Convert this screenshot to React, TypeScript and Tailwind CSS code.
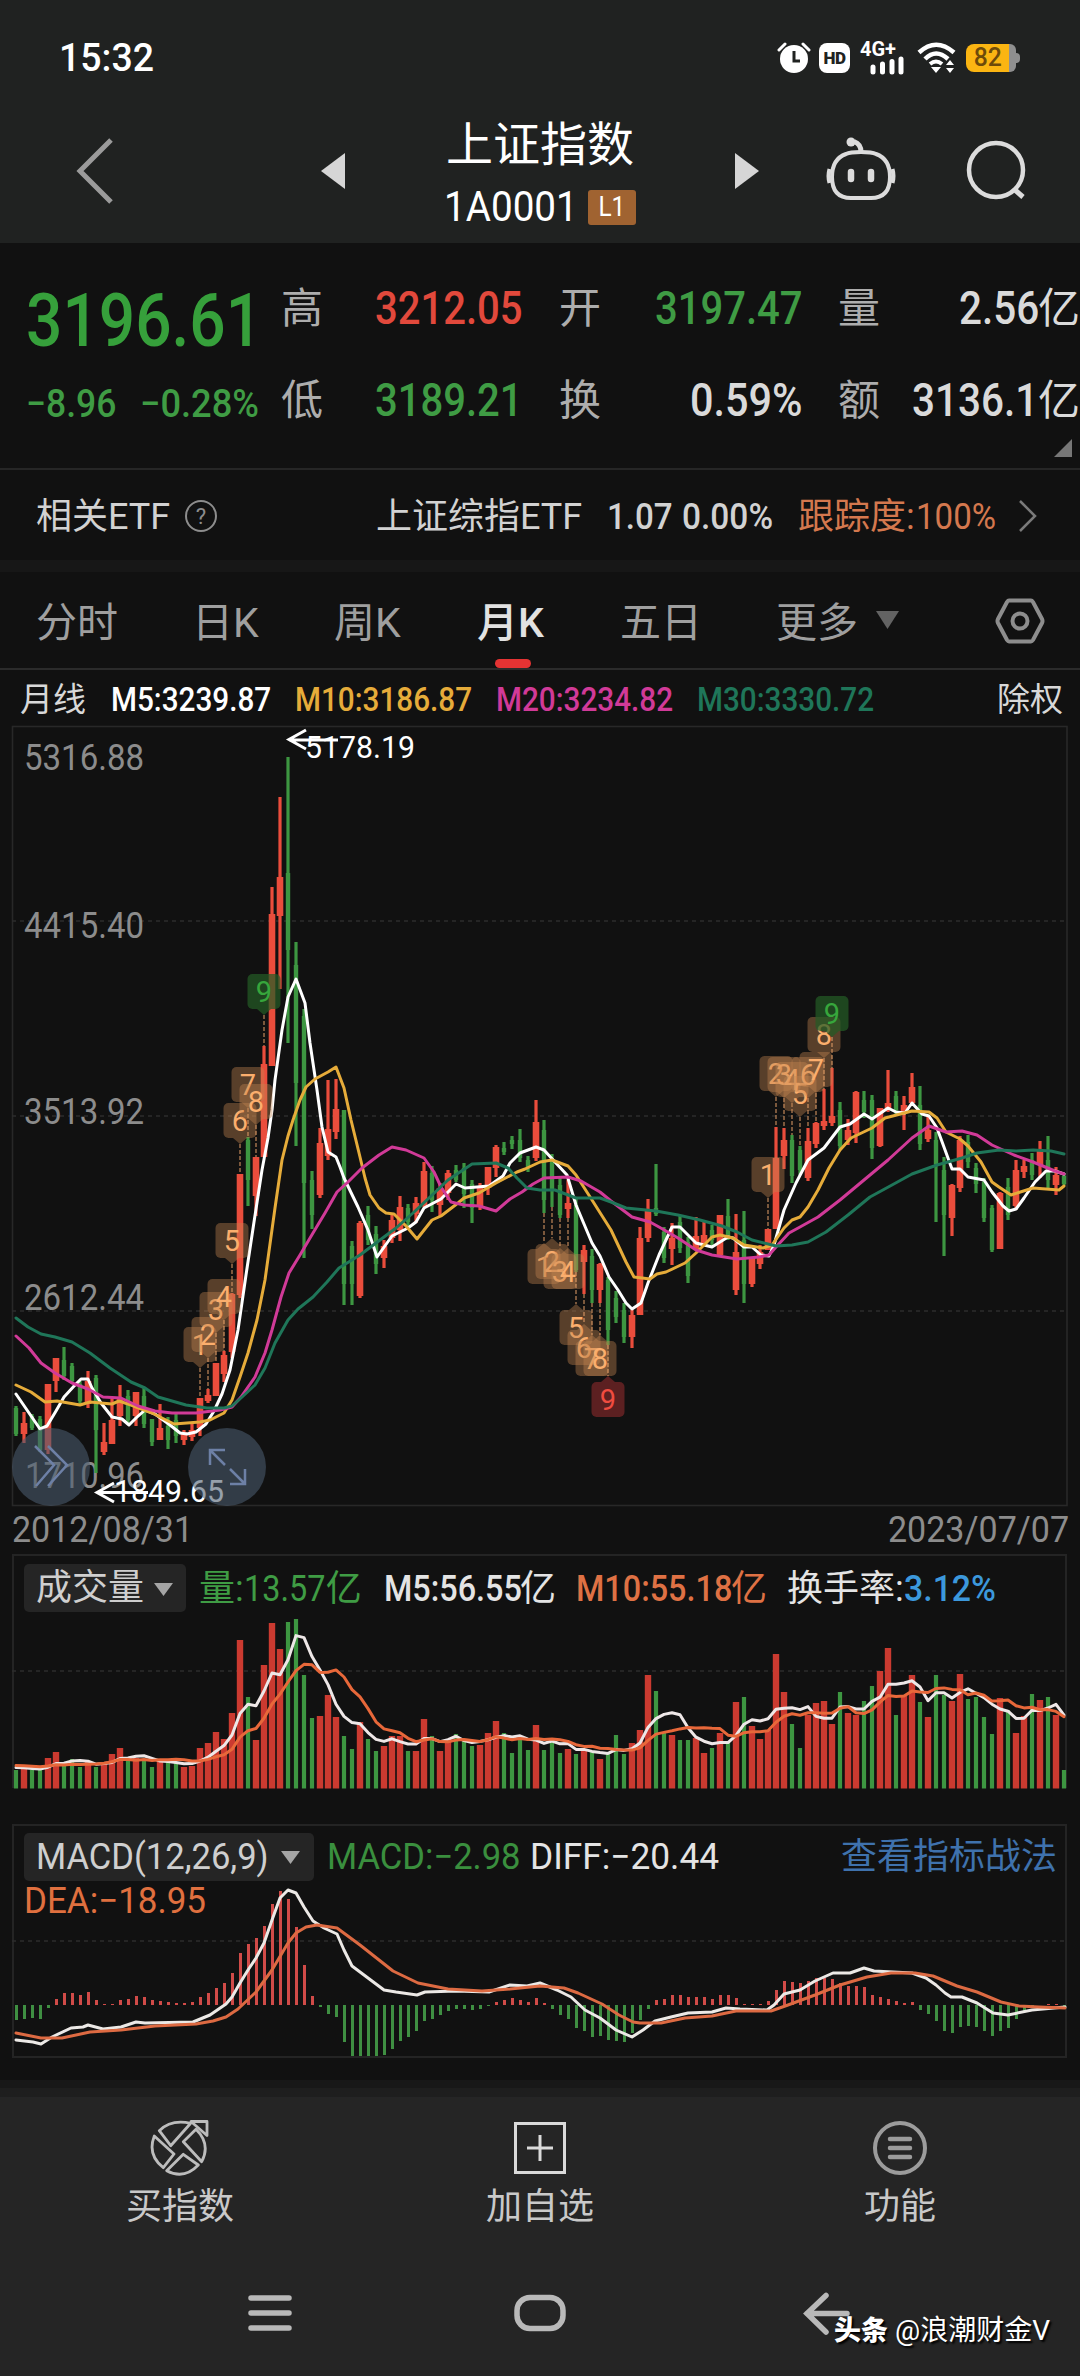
import React from "react";
import clsx from "clsx";

const RED = "#ea4d3c";
const GREEN = "#3d9641";
const FRAME = "#282828";

type Point = [number, number];
// direction, high, body top, body bottom, low (chart pixels)
type Candle = ["r" | "g", number, number, number, number];

const candles: Candle[] = [
  ["g", 1406, 1408, 1434, 1436], ["r", 1412, 1423, 1434, 1443], ["g", 1414, 1416, 1428, 1430], ["g", 1416, 1419, 1450, 1452],
  ["r", 1384, 1384, 1450, 1454], ["r", 1358, 1358, 1381, 1392], ["g", 1347, 1360, 1376, 1380], ["g", 1363, 1366, 1381, 1384],
  ["g", 1381, 1384, 1401, 1404], ["r", 1371, 1381, 1404, 1408], ["g", 1375, 1378, 1430, 1473], ["r", 1423, 1442, 1452, 1455],
  ["r", 1399, 1420, 1444, 1444], ["r", 1385, 1398, 1416, 1426], ["g", 1390, 1396, 1420, 1423], ["r", 1392, 1392, 1416, 1426],
  ["g", 1388, 1396, 1424, 1428], ["g", 1419, 1419, 1442, 1446], ["r", 1404, 1428, 1440, 1440], ["g", 1417, 1426, 1440, 1449],
  ["g", 1413, 1420, 1436, 1443], ["r", 1430, 1432, 1440, 1445], ["r", 1422, 1430, 1437, 1441], ["r", 1398, 1398, 1428, 1436],
  ["r", 1389, 1395, 1401, 1403], ["r", 1363, 1363, 1396, 1396], ["r", 1351, 1355, 1374, 1382], ["r", 1293, 1294, 1352, 1358],
  ["r", 1174, 1174, 1295, 1298], ["g", 1137, 1140, 1180, 1206], ["r", 1157, 1157, 1196, 1216], ["r", 1046, 1064, 1157, 1157],
  ["r", 887, 914, 1066, 1066], ["r", 797, 877, 916, 989], ["g", 757, 873, 950, 1043], ["g", 942, 965, 1083, 1146],
  ["g", 1009, 1016, 1183, 1258], ["g", 1171, 1180, 1215, 1229], ["r", 1128, 1143, 1195, 1198], ["r", 1080, 1129, 1156, 1160],
  ["r", 1079, 1109, 1132, 1139], ["g", 1110, 1110, 1284, 1305], ["g", 1241, 1246, 1284, 1305], ["r", 1221, 1223, 1296, 1298],
  ["g", 1206, 1215, 1240, 1245], ["g", 1226, 1234, 1264, 1274], ["r", 1240, 1246, 1258, 1268], ["r", 1215, 1220, 1238, 1243],
  ["r", 1196, 1207, 1230, 1241], ["g", 1204, 1208, 1222, 1227], ["r", 1197, 1203, 1214, 1223], ["r", 1162, 1171, 1206, 1207],
  ["g", 1166, 1173, 1200, 1212], ["r", 1183, 1188, 1205, 1216], ["r", 1170, 1173, 1193, 1200], ["g", 1165, 1170, 1180, 1182],
  ["g", 1163, 1168, 1194, 1208], ["g", 1180, 1184, 1208, 1223], ["r", 1183, 1186, 1206, 1210], ["r", 1167, 1167, 1188, 1195],
  ["r", 1145, 1147, 1168, 1177], ["g", 1142, 1148, 1152, 1155], ["g", 1136, 1140, 1144, 1149], ["g", 1129, 1140, 1158, 1162],
  ["g", 1156, 1160, 1168, 1172], ["r", 1100, 1122, 1158, 1161], ["g", 1120, 1130, 1200, 1213], ["g", 1154, 1160, 1190, 1207],
  ["g", 1178, 1185, 1215, 1218], ["r", 1180, 1203, 1209, 1218], ["g", 1198, 1205, 1270, 1272], ["r", 1245, 1250, 1262, 1294],
  ["g", 1249, 1256, 1290, 1303], ["r", 1263, 1264, 1290, 1303], ["g", 1277, 1280, 1330, 1345], ["g", 1291, 1298, 1317, 1323],
  ["g", 1303, 1310, 1337, 1343], ["r", 1310, 1315, 1337, 1348], ["r", 1227, 1238, 1315, 1315], ["r", 1199, 1211, 1238, 1242],
  ["g", 1164, 1208, 1214, 1216], ["g", 1227, 1232, 1258, 1263], ["r", 1223, 1238, 1249, 1265], ["g", 1216, 1222, 1248, 1253],
  ["g", 1237, 1242, 1276, 1283], ["r", 1217, 1236, 1249, 1249], ["r", 1222, 1235, 1244, 1246], ["g", 1225, 1230, 1240, 1247],
  ["r", 1215, 1215, 1255, 1257], ["g", 1199, 1216, 1236, 1240], ["r", 1214, 1252, 1290, 1295], ["g", 1211, 1240, 1284, 1303],
  ["r", 1257, 1257, 1284, 1287], ["r", 1245, 1252, 1264, 1269], ["r", 1229, 1229, 1250, 1250], ["r", 1127, 1158, 1229, 1229],
  ["r", 1128, 1140, 1156, 1169], ["g", 1135, 1140, 1176, 1183], ["g", 1146, 1150, 1170, 1175], ["r", 1128, 1141, 1178, 1181],
  ["r", 1122, 1123, 1144, 1148], ["r", 1089, 1121, 1126, 1130], ["r", 1068, 1116, 1123, 1126], ["g", 1102, 1110, 1146, 1150],
  ["r", 1119, 1130, 1140, 1145], ["r", 1091, 1092, 1133, 1143], ["g", 1091, 1100, 1112, 1118], ["g", 1095, 1100, 1148, 1159],
  ["r", 1108, 1108, 1146, 1147], ["r", 1070, 1103, 1108, 1112], ["g", 1091, 1096, 1110, 1114], ["r", 1096, 1105, 1112, 1130],
  ["r", 1073, 1087, 1103, 1106], ["g", 1086, 1105, 1144, 1150], ["r", 1117, 1130, 1139, 1142], ["g", 1132, 1140, 1164, 1222],
  ["g", 1157, 1170, 1215, 1256], ["r", 1184, 1185, 1218, 1236], ["r", 1136, 1140, 1188, 1192], ["g", 1135, 1142, 1162, 1168],
  ["g", 1163, 1168, 1184, 1193], ["g", 1178, 1182, 1218, 1222], ["g", 1205, 1208, 1250, 1252], ["r", 1192, 1193, 1249, 1249],
  ["g", 1178, 1187, 1215, 1220], ["r", 1160, 1170, 1206, 1210], ["r", 1160, 1166, 1172, 1178], ["g", 1153, 1160, 1175, 1180],
  ["r", 1141, 1151, 1165, 1178], ["g", 1136, 1160, 1180, 1188], ["r", 1167, 1175, 1185, 1195], ["g", 1175, 1176, 1184, 1185],
];

const ma5 =
  "16,1394 40,1429 47,1426 56,1411 64,1397 75,1385 81,1379 88,1379 92,1388 101,1403 112,1417 122,1419 129,1425 136,1418 145,1410 155,1414 170,1425 180,1433 187,1434 196,1432 206,1424 214,1411 222,1394 230,1370 238,1330 246,1275 254,1222 262,1170 268,1138 272,1110 275,1080 282,1030 288,997 296,979 305,1003 310,1043 317,1090 322,1127 328,1152 336,1157 340,1167 344,1178 358,1207 368,1230 377,1257 392,1236 408,1228 416,1222 424,1208 441,1199 448,1192 456,1184 465,1188 489,1186 503,1176 510,1163 520,1153 536,1147 544,1150 555,1162 567,1175 576,1205 592,1243 600,1256 609,1277 618,1290 626,1303 632,1309 641,1303 648,1283 659,1255 672,1227 680,1227 696,1243 712,1247 728,1237 733,1238 744,1247 752,1247 761,1255 769,1256 774,1245 784,1210 796,1183 808,1160 824,1148 840,1127 850,1124 864,1114 872,1119 888,1108 896,1112 905,1113 912,1103 922,1114 929,1116 937,1128 952,1169 960,1169 968,1177 984,1180 992,1192 1003,1206 1009,1211 1016,1209 1024,1198 1035,1182 1046,1171 1055,1171 1064,1174";
const ma10 =
  "16,1385 31,1392 45,1402 57,1401 80,1405 90,1402 112,1404 119,1401 131,1405 152,1413 174,1424 200,1422 210,1420 224,1413 232,1400 240,1377 248,1353 257,1320 265,1280 275,1208 282,1160 288,1136 293,1120 300,1100 306,1087 315,1079 328,1072 336,1067 344,1088 351,1120 360,1157 365,1178 370,1195 379,1208 386,1213 394,1214 406,1226 417,1239 432,1220 441,1216 458,1203 464,1198 479,1193 496,1183 517,1172 525,1169 540,1162 552,1160 568,1166 576,1175 592,1200 611,1230 626,1262 634,1277 650,1279 657,1274 666,1272 685,1263 696,1253 712,1237 720,1235 733,1238 744,1245 763,1248 772,1245 784,1228 792,1220 800,1217 808,1207 818,1190 829,1168 840,1150 851,1138 872,1128 885,1118 912,1111 929,1112 937,1118 946,1132 960,1139 968,1146 981,1162 992,1182 999,1187 1011,1195 1033,1188 1059,1190 1064,1186";
const ma20 =
  "16,1336 29,1348 41,1363 55,1373 72,1383 88,1389 103,1397 121,1398 138,1406 155,1411 172,1413 196,1413 220,1410 232,1407 241,1397 255,1377 265,1353 272,1330 281,1297 289,1273 300,1255 313,1233 325,1213 337,1192 348,1182 362,1168 379,1155 392,1147 406,1150 424,1158 434,1172 441,1187 451,1202 464,1205 479,1206 496,1211 510,1199 522,1192 533,1184 544,1178 568,1177 581,1181 600,1192 611,1201 632,1217 650,1222 659,1227 678,1238 696,1250 712,1255 737,1259 759,1257 769,1255 776,1247 789,1233 800,1227 818,1217 840,1200 870,1175 888,1160 912,1138 929,1126 946,1132 962,1131 977,1135 992,1145 1014,1155 1033,1162 1055,1171 1064,1174";
const ma30 =
  "16,1318 28,1327 41,1334 55,1337 72,1342 90,1353 110,1368 131,1382 145,1388 158,1397 186,1405 207,1408 224,1408 232,1406 241,1398 255,1385 265,1368 275,1343 288,1320 298,1309 313,1297 327,1282 339,1268 360,1255 376,1243 396,1228 413,1213 430,1197 448,1180 463,1170 472,1164 496,1163 508,1168 517,1178 527,1188 540,1190 555,1190 576,1198 600,1198 611,1202 626,1208 656,1211 678,1215 700,1220 722,1226 737,1232 752,1240 776,1246 792,1245 808,1242 826,1232 848,1215 870,1197 892,1185 912,1174 937,1165 962,1158 977,1153 999,1150 1016,1151 1033,1150 1051,1151 1064,1154";

// bar heights of the monthly volume
const volumes = [
  18, 20, 18, 18, 30, 36, 22, 29, 21, 26, 21, 26, 34, 40, 29, 30, 28, 21, 27, 26, 26, 21, 22, 40, 45, 56, 49, 75, 148, 91, 48, 123, 165,
  139, 166, 169, 113, 70, 72, 93, 71, 52, 39, 66, 49, 37, 42, 52, 52, 37, 37, 69, 52, 37, 47, 54, 47, 42, 43, 55, 67, 55, 35, 49, 38, 63,
  38, 47, 35, 39, 34, 38, 37, 29, 35, 53, 34, 45, 58, 113, 97, 55, 53, 48, 48, 50, 35, 40, 55, 47, 86, 91, 62, 49, 58, 134, 96, 64, 40,
  73, 85, 87, 64, 96, 75, 73, 87, 102, 117, 140, 73, 93, 113, 86, 71, 113, 93, 87, 114, 89, 91, 71, 54, 90, 78, 55, 72, 94, 88, 91, 73, 18,
];

const macdBars = [
  -15, -14, -13, -14, -3, 6, 12, 12, 10, 13, 5, 1, 1, 5, 6, 9, 8, 5, 4, 3, 2, 2, 3, 8, 12, 17, 22, 32, 52, 61, 67, 79, 101, 114, 106, 78,
  40, 9, -2, -9, -12, -37, -51, -51, -51, -51, -50, -44, -36, -32, -26, -16, -14, -10, -6, -4, -4, -5, -4, -1, 3, 5, 7, 5, 3, 7, 2, -4,
  -10, -14, -23, -26, -32, -31, -35, -36, -37, -28, -15, -4, 5, 6, 10, 10, 8, 8, 8, 6, 10, 10, 7, 1, 1, 1, 4, 15, 24, 23, 22, 24, 27, 27,
  26, 22, 19, 19, 18, 10, 8, 6, 4, 2, 3, -5, -9, -16, -26, -28, -22, -21, -22, -26, -31, -26, -23, -14, -6, -2, 0, 1, 1, -1,
];
const diffLine =
  "16,2040 33,2042 41,2044 52,2037 71,2028 83,2027 88,2025 103,2029 121,2027 136,2022 145,2023 193,2022 210,2015 226,2004 232,1997 240,1983 248,1970 256,1958 264,1943 272,1920 280,1898 288,1890 296,1893 304,1907 313,1921 324,1928 337,1934 344,1950 352,1966 368,1978 384,1990 396,1992 417,1995 425,1992 456,1991 489,1992 510,1985 527,1986 540,1983 557,1990 571,1997 585,2010 600,2018 616,2030 632,2037 643,2030 655,2021 671,2017 688,2013 712,2012 726,2008 740,2009 767,2010 774,2005 784,1994 800,1990 815,1981 833,1973 850,1973 864,1968 874,1971 912,1973 926,1978 936,1985 945,1993 951,1997 962,1997 977,2003 993,2013 1008,2015 1032,2010 1065,2007";
const deaLine =
  "16,2033 41,2038 62,2038 90,2032 121,2030 155,2026 196,2024 213,2021 226,2017 238,2009 256,1992 272,1970 288,1943 296,1933 306,1927 317,1925 337,1928 360,1945 393,1971 418,1983 448,1989 482,1991 510,1989 540,1986 564,1988 578,1993 602,2004 619,2015 633,2022 640,2023 661,2023 685,2018 712,2016 736,2011 771,2011 788,2005 815,1995 840,1985 867,1977 891,1973 915,1973 933,1976 957,1986 977,1992 1001,2002 1019,2006 1039,2007 1065,2008";

interface Mark {
  n: number;
  i: number;
  top: number;
  below?: boolean;
}

const marks: Mark[] = [
  { n: 1, i: 23, top: 1327 }, { n: 2, i: 24, top: 1317 }, { n: 3, i: 25, top: 1292 }, { n: 4, i: 26, top: 1279 },
  { n: 5, i: 27, top: 1223 }, { n: 6, i: 28, top: 1103 }, { n: 7, i: 29, top: 1067 }, { n: 8, i: 30, top: 1084 },
  { n: 9, i: 31, top: 974 },
  { n: 1, i: 66, top: 1249, below: true }, { n: 2, i: 67, top: 1244, below: true }, { n: 3, i: 68, top: 1254, below: true },
  { n: 4, i: 69, top: 1254, below: true }, { n: 5, i: 70, top: 1310, below: true }, { n: 6, i: 71, top: 1330, below: true },
  { n: 7, i: 72, top: 1341, below: true }, { n: 8, i: 73, top: 1341, below: true }, { n: 9, i: 74, top: 1382, below: true },
  { n: 1, i: 94, top: 1157 }, { n: 2, i: 95, top: 1056 }, { n: 3, i: 96, top: 1057 }, { n: 4, i: 97, top: 1062 },
  { n: 5, i: 98, top: 1076 }, { n: 6, i: 99, top: 1057 }, { n: 7, i: 100, top: 1052 }, { n: 8, i: 101, top: 1017 },
  { n: 9, i: 102, top: 996 },
];

const xAt = (i: number) => 16 + i * 8;

const average = (period: number, seed: number) =>
  volumes
    .map((_, i): Point => {
      let sum = 0;
      for (let k = 0; k < period; k++) sum += volumes[i - k] ?? seed;
      return [xAt(i), 1788 - sum / period];
    })
    .map((p) => p.join(","))
    .join(" ");

interface ChartTextProps {
  x: number;
  y: number;
  w: number;
  size: number;
  fill: string;
  children: React.ReactNode;
}

const ChartText: React.FC<ChartTextProps> = ({ x, y, w, size, fill, children }) => (
  <text x={x} y={y} fontSize={size} fill={fill} textLength={w} lengthAdjust="spacingAndGlyphs">
    {children}
  </text>
);

const Line: React.FC<{ points: string; color: string; width?: number }> = ({ points, color, width = 3 }) => (
  <polyline points={points} fill="none" stroke={color} strokeWidth={width} strokeLinejoin="round" strokeLinecap="round" />
);

const GridLine: React.FC<{ y: number }> = ({ y }) => (
  <line x1={12} x2={1065} y1={y} y2={y} stroke="#2c2c2c" strokeWidth={1.6} strokeDasharray="4 4" />
);

const MarkBadge: React.FC<Mark> = ({ n, i, top, below }) => {
  const x = xAt(i);
  const bottom = top + 35;
  const fill = n !== 9 ? "rgba(196,132,80,0.4)" : below ? "#5c2021" : "rgba(36,92,38,0.72)";
  const color = n !== 9 ? "#fbae6d" : below ? "#f04c40" : "#37a63c";
  const tip = below ? `M${x - 7} ${top}L${x} ${top - 6}L${x + 7} ${top}Z` : `M${x - 7} ${bottom}L${x} ${bottom + 6}L${x + 7} ${bottom}Z`;
  return (
    <g>
      <line
        x1={x}
        x2={x}
        y1={below ? candles[i][4] : bottom + 6}
        y2={below ? top - 6 : candles[i][1]}
        stroke="#e6a069"
        strokeWidth={1}
        strokeDasharray="4 2"
      />
      <rect x={x - 16.5} y={top} width={33} height={35} rx={5} fill={fill} />
      <path d={tip} fill={fill} />
      <text x={x} y={top + 28} fontSize={29} fill={color} textAnchor="middle">
        {n}
      </text>
    </g>
  );
};

const PriceChart: React.FC = () => (
  <svg className="block w-[1080px] h-[784px]" viewBox="0 724 1080 784">
    <rect x={12.5} y={726.5} width={1054.5} height={779} fill="none" stroke={FRAME} strokeWidth={1.6} />
    <GridLine y={921} />
    <GridLine y={1116} />
    <GridLine y={1311} />
    <g>
      <ChartText x={24} y={770} w={120} size={36} fill="#8c8c8c">5316.88</ChartText>
      <ChartText x={24} y={938} w={120} size={36} fill="#8c8c8c">4415.40</ChartText>
      <ChartText x={24} y={1124} w={120} size={36} fill="#8c8c8c">3513.92</ChartText>
      <ChartText x={24} y={1310} w={120} size={36} fill="#8c8c8c">2612.44</ChartText>
      <ChartText x={25} y={1488} w={119} size={36} fill="#8c8c8c">1710.96</ChartText>
    </g>
    {candles.map(([dir, high, top, bottom, low], i) => {
      const x = xAt(i);
      const up = dir === "r";
      const half = up ? 3.3 : 2.2;
      return (
        <g key={i} fill={up ? RED : GREEN}>
          <rect x={x - 1.6} y={high} width={3.2} height={low - high} />
          <rect x={x - half} y={top} width={half * 2} height={bottom - top} />
        </g>
      );
    })}
    <Line points={ma5} color="#ffffff" />
    <Line points={ma10} color="#e6ac3a" />
    <Line points={ma20} color="#d13a98" />
    <Line points={ma30} color="#1f7659" />
    {marks.map((m) => (
      <MarkBadge key={`${m.i}-${m.n}`} {...m} />
    ))}
    <path d="M338 740H289M306 730L289 739.500L306 749" fill="none" stroke="#fff" strokeWidth={3} />
    <ChartText x={305} y={758} w={110} size={31} fill="#fff">5178.19</ChartText>
    <path d="M148 1492.500H97M114 1483L97 1492.500L114 1502" fill="none" stroke="#fff" strokeWidth={3} />
    <ChartText x={114} y={1502} w={110} size={31} fill="#fff">1849.65</ChartText>
    <g fill="rgba(74,92,110,0.58)">
      <circle cx={51} cy={1467} r={39} />
      <circle cx={227} cy={1467} r={39} />
    </g>
    <g fill="none" stroke="#6d80a6" strokeWidth={2.5}>
      <path d="M35 1446L54 1465L36 1486M48 1446L67 1465L48 1486" />
      <path d="M225 1450H210V1465M210 1450L225 1465M230 1484H245V1469M245 1484L230 1469" />
    </g>
  </svg>
);

const VolumeBars: React.FC = () => (
  <svg className="block w-[1080px] h-[176px]" viewBox="0 1614 1080 176">
    <path d="M13 1614V1788M1066 1614V1788" stroke="#242424" strokeWidth={2} />
    <GridLine y={1671} />
    {volumes.map((v, i) => {
      const up = candles[i][0] === "r";
      const half = up ? 3.2 : 2.1;
      return <rect key={i} x={xAt(i) - half} y={1788 - v} width={half * 2} height={v + 0.5} fill={up ? "#cb3a30" : GREEN} />;
    })}
    <Line points={average(5, 21)} color="#eee7e7" />
    <Line points={average(10, 23)} color="#e8683a" />
  </svg>
);

const MacdBars: React.FC = () => (
  <svg className="block w-[1080px] h-[172px] overflow-visible" viewBox="0 1884 1080 172">
    <GridLine y={1941} />
    {macdBars.map((v, i) => (
      <rect
        key={i}
        x={xAt(i) - 1}
        y={v > 0 ? 2005 - v : 2005}
        width={3}
        height={Math.abs(v)}
        fill={v > 0 ? "#d14b48" : "#3f8f42"}
      />
    ))}
    <Line points={diffLine} color="#ece9e6" />
    <Line points={deaLine} color="#dd6a42" />
    <ChartText x={24} y={1913} w={182} size={36} fill="#e0703f">DEA:−18.95</ChartText>
  </svg>
);

/* narrow numerals, squeezed from the left edge */
const Num: React.FC<{ className?: string; children: React.ReactNode }> = ({ className, children }) => (
  <span className={clsx("inline-block w-0 origin-left whitespace-nowrap", className)}>{children}</span>
);

const StatusBar: React.FC = () => (
  <div className="flex h-[116px] items-center pl-[59px] pr-[60px] text-white">
    <Num className="scale-x-[0.96] text-[39px] font-medium">15:32</Num>
    <div className="ml-auto flex items-center">
      <svg className="h-8 w-[34px]" viewBox="0 0 34 32">
        <circle cx="17" cy="17" r="14" fill="#fff" />
        <path d="M2 8L8 2M32 8L26 2" stroke="#fff" strokeWidth="3" strokeLinecap="round" />
        <path d="M17 9V19H23" fill="none" stroke="#202221" strokeWidth="3" />
      </svg>
      <div className="ml-2 flex h-[30px] w-[31px] items-center justify-center rounded-[8px] bg-white text-[17px] font-black tracking-tight text-[#202221]">
        HD
      </div>
      <svg className="ml-[10px] h-8 w-[48px] overflow-visible" viewBox="0 0 48 32">
        <text x="0" y="14" fontSize="20" fontWeight="700" fill="#fff" textLength="36" lengthAdjust="spacingAndGlyphs">4G+</text>
        <path d="M13 25V30M22.500 22V30M32 19.500V30M41 17V30" stroke="#fff" strokeWidth="5" strokeLinecap="round" />
      </svg>
      <svg className="ml-[9px] h-8 w-[40px]" viewBox="0 0 40 32">
        <path d="M2 10.500Q19 -5 37 10.500" fill="none" stroke="#fff" strokeWidth="4.500" />
        <path d="M8 17Q19 6 31 17" fill="none" stroke="#fff" strokeWidth="4.500" />
        <path d="M13 22Q19 17 25 22" fill="none" stroke="#fff" strokeWidth="4" />
        <path d="M14 25H24L19 31ZM29 23L33 18L37 23ZM29 26H37L33 31Z" fill="#fff" />
      </svg>
      <div className="ml-[9px] flex items-center">
        <div className="flex h-7 w-[43px] items-center justify-center rounded-l-[8px] bg-[#fbb512] text-[26px] font-medium text-[#6d4a0a]">
          <span className="scale-x-[0.95]">82</span>
        </div>
        <div className="h-7 w-[7px] rounded-r-[6px] bg-[#8f8f8f]" />
        <div className="h-2.5 w-[4px] rounded-r-full bg-[#8f8f8f]" />
      </div>
    </div>
  </div>
);

const TitleBar: React.FC = () => (
  <div className="flex h-[127px] items-start">
    <svg className="ml-[74px] mt-[20px] h-[70px] w-[46px]" viewBox="0 0 46 70" fill="none" stroke="#9b9b9b" strokeWidth="5">
      <path d="M37 4L6 35L37 66" />
    </svg>
    <svg className="ml-[201px] mt-[37px] h-[36px] w-[24px]" viewBox="0 0 24 36">
      <path d="M24 0V36L0 18Z" fill="#d6d6d6" />
    </svg>
    <div className="flex w-[390px] flex-col items-center text-white">
      <div className="text-[47px] leading-[57px]">上证指数</div>
      <div className="mt-[13px] flex h-[42px] items-center">
        <div className="w-[144px]">
          <Num className="scale-x-[0.92] text-[42px] leading-[42px]">1A0001</Num>
        </div>
        <div className="flex h-[35px] w-[48px] items-center justify-center rounded-[3px] bg-[#a06331] text-[27px] leading-none">
          <span className="scale-x-[0.9]">L1</span>
        </div>
      </div>
    </div>
    <svg className="mt-[37px] h-[36px] w-[24px]" viewBox="0 0 24 36">
      <path d="M0 0V36L24 18Z" fill="#d6d6d6" />
    </svg>
    <svg className="ml-[66px] mt-[20px] h-[66px] w-[72px]" viewBox="0 0 72 66" fill="none" stroke="#dcdcdc">
      <path d="M21 18Q25 16 36 16Q47 16 51 18Q65 23 65 41Q65 62 46 62H26Q7 62 7 41Q7 23 21 18Z" strokeWidth="4" />
      <path d="M36 16Q36 8 29 5.500" strokeWidth="5" />
      <circle cx="26" cy="6" r="4.500" fill="#dcdcdc" stroke="none" />
      <path d="M4.500 33Q2.500 40 4.500 47M67.500 33Q69.500 40 67.500 47" strokeWidth="4" />
      <path d="M26 36V43M46 36V43" strokeWidth="6.500" strokeLinecap="round" />
    </svg>
    <svg className="ml-[68px] mt-[23px] h-[62px] w-[64px]" viewBox="0 0 64 62" fill="none" stroke="#dcdcdc" strokeWidth="4.500">
      <circle cx="31" cy="31" r="27" />
      <path d="M50 51L58 58" strokeWidth="5" />
    </svg>
  </div>
);

const Quote: React.FC = () => (
  <div className="h-[227px] border-b-2 border-[#262626] pt-[31px]">
    <div className="grid h-[185px] grid-cols-[26px_114px_141px_94px_184px_96px_183px_74px_1fr] content-start text-[42px] text-[#adadad]">
      <div />
      <div className="col-span-2 flex h-[94px] items-center">
        <Num className="scale-x-[0.865] text-[74px] font-medium leading-none text-[#36a03b]">3196.61</Num>
      </div>
      <div className="flex h-[70px] items-center">高</div>
      <div className="flex h-[70px] items-center">
        <Num className="scale-x-[0.87] text-[46px] font-medium text-[#e2493c]">3212.05</Num>
      </div>
      <div className="flex h-[70px] items-center">开</div>
      <div className="flex h-[70px] items-center">
        <Num className="scale-x-[0.87] text-[46px] font-medium text-[#3f9c44]">3197.47</Num>
      </div>
      <div className="flex h-[70px] items-center">量</div>
      <div className="flex h-[70px] items-center text-[#dadada]">
        <div className="w-[47px]" />
        <div className="w-[79px]">
          <Num className="scale-x-[0.88] text-[46px] font-medium">2.56</Num>
        </div>
        亿
      </div>
      <div />
      <div className="flex h-[72px] items-center">
        <Num className="scale-x-[0.91] text-[39px] font-medium text-[#3f9c44]">−8.96</Num>
      </div>
      <div className="flex h-[72px] items-center">
        <Num className="scale-x-[0.93] text-[39px] font-medium text-[#3f9c44]">−0.28%</Num>
      </div>
      <div className="flex h-[66px] items-center">低</div>
      <div className="flex h-[66px] items-center">
        <Num className="scale-x-[0.87] text-[46px] font-medium text-[#3f9c44]">3189.21</Num>
      </div>
      <div className="flex h-[66px] items-center">换</div>
      <div className="flex h-[66px] items-center pl-[35px] text-[#dadada]">
        <Num className="scale-x-[0.9] text-[46px] font-medium">0.59%</Num>
      </div>
      <div className="flex h-[66px] items-center">额</div>
      <div className="flex h-[66px] items-center text-[#dadada]">
        <div className="w-[126px]">
          <Num className="scale-x-[0.88] text-[46px] font-medium">3136.1</Num>
        </div>
        亿
      </div>
    </div>
    <svg className="-mt-[20px] ml-[1054px] h-[18px] w-[18px]" viewBox="0 0 18 18">
      <path d="M18 0V18H0Z" fill="#777" />
    </svg>
  </div>
);

const EtfRow: React.FC = () => (
  <div className="flex h-[90px] items-center pl-[36px] pt-[5px] text-[36px] text-[#d2d2d2]">
    <div className="w-[148px]">相关ETF</div>
    <svg className="mb-[3px] h-[34px] w-[34px]" viewBox="0 0 34 34">
      <circle cx="17" cy="17" r="15" fill="none" stroke="#8d8d8d" strokeWidth="2" />
      <text x="17" y="25" fontSize="22" fill="#8d8d8d" textAnchor="middle">?</text>
    </svg>
    <div className="ml-[158px] w-[231px] whitespace-nowrap">上证综指ETF</div>
    <div className="w-[75px]">
      <Num className="scale-x-[0.92] font-medium">1.07</Num>
    </div>
    <div className="w-[116px]">
      <Num className="scale-x-[0.93] font-medium">0.00%</Num>
    </div>
    <div className="w-[118px] text-[#d4784e]">跟踪度:</div>
    <div className="w-[102px] text-[#d4784e]">
      <Num className="scale-x-[0.92]">100%</Num>
    </div>
    <svg className="mb-[4px] h-[34px] w-[20px]" viewBox="0 0 20 34" fill="none" stroke="#7a7a7a" strokeWidth="2.500">
      <path d="M2 2L17 17L2 32" />
    </svg>
  </div>
);

const tabs = [
  { label: "分时", width: "w-[156px]" },
  { label: "日K", width: "w-[142px]" },
  { label: "周K", width: "w-[143px]" },
  { label: "月K", width: "w-[143px]", active: true },
  { label: "五日", width: "w-[156px]" },
  { label: "更多", width: "w-[100px]" },
];

const Tabs: React.FC = () => (
  <div className="flex h-[98px] items-center border-b-2 border-[#2b2b2b] pl-[36px] text-[41px] text-[#9f9f9f]">
    {tabs.map((t) => (
      <div key={t.label} className={clsx("relative flex h-full items-center pt-[7px]", t.width, t.active && "font-medium text-[#e2e2e2]")}>
        {t.label}
        {t.active && <div className="absolute bottom-0 left-[18px] h-[9px] w-[36px] rounded-[5px] bg-[#e43333]" />}
      </div>
    ))}
    <svg className="h-[18px] w-[23px]" viewBox="0 0 23 18">
      <path d="M0 0H23L11.500 18Z" fill="#636363" />
    </svg>
    <svg className="ml-[95px] mt-[2px] h-[48px] w-[52px]" viewBox="0 0 52 48" fill="none" stroke="#8d8d8d" strokeWidth="4">
      <path d="M15 3.500H37Q38 3.500 39 5L48 22Q49 24 48 26L39 43Q38 44.500 37 44.500H15Q14 44.500 13 43L4 26Q3 24 4 22L13 5Q14 3.500 15 3.500Z" />
      <circle cx="26" cy="24" r="7.500" />
    </svg>
  </div>
);

const MaRow: React.FC = () => (
  <div className="flex h-[54px] items-center pl-[20px] pt-[5px] text-[33px] text-[#d8d8d8]">
    <div className="w-[91px]">月线</div>
    <div className="w-[184px] text-white">
      <Num className="scale-x-[0.9] font-medium">M5:3239.87</Num>
    </div>
    <div className="w-[201px] text-[#e6ac3a]">
      <Num className="scale-x-[0.9] font-medium">M10:3186.87</Num>
    </div>
    <div className="w-[201px] text-[#d13a98]">
      <Num className="scale-x-[0.9] font-medium">M20:3234.82</Num>
    </div>
    <div className="w-[300px] text-[#1f7659]">
      <Num className="scale-x-[0.9] font-medium">M30:3330.72</Num>
    </div>
    <div>除权</div>
  </div>
);

const Caret: React.FC = () => (
  <svg className="h-[13px] w-[19px]" viewBox="0 0 19 13">
    <path d="M0 0H19L9.500 13Z" fill="#a5a5a5" />
  </svg>
);

const VolumePanel: React.FC = () => (
  <div className="mt-[1px]">
    <div className="ml-[12px] flex h-[60px] w-[1055px] items-center border-x-2 border-t-2 border-[#242424] pl-[10px] pt-[9px] text-[36px] text-[#e4e4e4]">
      <div className="-mt-[4px] flex h-[48px] w-[162px] items-center gap-[10px] rounded-[5px] bg-[#252525] pl-[12px] pt-[3px] text-[36px] text-[#cfcfcf]">
        成交量
        <Caret />
      </div>
      <div className="ml-[13px] flex w-[185px] items-center text-[#3f9c44]">
        量:
        <div className="w-[82px]"><Num className="scale-x-[0.9]">13.57</Num></div>
        亿
      </div>
      <div className="flex w-[192px] items-center">
        <div className="w-[136px]"><Num className="scale-x-[0.9] font-medium">M5:56.55</Num></div>
        亿
      </div>
      <div className="flex w-[211px] items-center text-[#df7144]">
        <div className="w-[155px]"><Num className="scale-x-[0.9] font-medium">M10:55.18</Num></div>
        亿
      </div>
      <div className="w-[117px]">换手率:</div>
      <Num className="scale-x-[0.94] font-medium text-[#3c98dc]">3.12%</Num>
    </div>
    <VolumeBars />
  </div>
);

const MacdPanel: React.FC = () => (
  <div className="mt-[34px]">
    <div className="ml-[12px] w-[1055px] border-2 border-[#242424]">
      <div className="flex h-[58px] items-center pl-[10px] pt-[6px] text-[36px] text-[#e4e4e4]">
        <div className="-mt-[3px] flex h-[48px] w-[290px] items-center rounded-[5px] bg-[#252525] pl-[12px] pt-[2px] text-[#cfcfcf]">
          <div className="w-[245px]"><Num className="scale-x-[0.96]">MACD(12,26,9)</Num></div>
          <Caret />
        </div>
        <div className="ml-[13px] w-[203px] text-[#3a8f3e]"><Num className="scale-x-[0.96]">MACD:−2.98</Num></div>
        <div className="w-[311px]"><Num className="scale-x-[0.98]">DIFF:−20.44</Num></div>
        <div className="whitespace-nowrap text-[#3f72ad]">查看指标战法</div>
      </div>
      <div className="-ml-[14px]">
        <MacdBars />
      </div>
    </div>
  </div>
);

const BottomBar: React.FC = () => (
  <div className="border-t-[9px] border-[#1e1e1e] bg-[#252525] text-[36px] text-[#c9c9c9]">
    <div className="grid h-[150px] grid-cols-3 justify-items-center pt-[22px]">
      <div className="flex flex-col items-center">
        <svg className="h-[60px] w-[60px]" viewBox="0 0 60 60" fill="none" stroke="#bdbdbd" strokeWidth="2.800" strokeLinejoin="round">
          <path d="M9.300 11.700Q21 0 40.700 4.300L20.700 26.700Z" />
          <path d="M46 10.300Q61 25 51.700 42.700L33.300 22.700Z" />
          <path d="M48.300 46Q34 61 16.700 51.700L33.300 35.300Z" />
          <path d="M13.300 48.700Q-3 36 4.300 17L24 35Z" />
          <path d="M41 2.500H57V16.500Z" />
        </svg>
        <div className="leading-[56px]">买指数</div>
      </div>
      <div className="flex flex-col items-center">
        <svg className="h-[60px] w-[60px]" viewBox="0 0 60 60" fill="none" stroke="#dadada" strokeWidth="3">
          <rect x="5.500" y="4.500" width="49" height="49" />
          <path d="M17 29H43M30 16V42" />
        </svg>
        <div className="leading-[56px]">加自选</div>
      </div>
      <div className="flex flex-col items-center">
        <svg className="h-[60px] w-[60px]" viewBox="0 0 60 60" fill="none" stroke="#9c9c9c" strokeWidth="4">
          <circle cx="30" cy="29" r="25" />
          <path d="M20 20H40M20 29H40M20 38H40" strokeWidth="4.500" strokeLinecap="round" />
        </svg>
        <div className="leading-[56px]">功能</div>
      </div>
    </div>
    <div className="relative flex h-[129px] items-start pt-[45px]">
      <svg className="ml-[247px] h-[42px] w-[46px]" viewBox="0 0 46 42" stroke="#b9b9b9" strokeWidth="5.500" strokeLinecap="round">
        <path d="M4 6H42M4 21H42M4 36H42" />
      </svg>
      <svg className="ml-[219px] h-[42px] w-[56px]" viewBox="0 0 56 42" fill="none" stroke="#b9b9b9" strokeWidth="5.500">
        <rect x="5" y="5.500" width="46" height="31" rx="13" />
      </svg>
      <svg className="ml-[234px] h-[44px] w-[50px]" viewBox="0 0 50 44" fill="none" stroke="#b9b9b9" strokeWidth="5.500" strokeLinecap="round">
        <path d="M24 3.500L5 21.500L24 40M5 21.500H45" />
      </svg>
      <div className="absolute left-[834px] top-[64px] flex items-center whitespace-nowrap text-[28px] leading-[40px] text-white [text-shadow:2px_2px_2px_#000]">
        <span className="w-[61px] text-[27px] font-black">头条</span>
        <span>@浪潮财金V</span>
      </div>
    </div>
  </div>
);

const App: React.FC = () => (
  <div className="h-[2376px] w-[1080px] overflow-hidden bg-[#111111] font-[Roboto,'Noto_Sans_CJK_SC',sans-serif] leading-[1.2]">
    <div className="h-[243px] bg-[#202221]">
      <StatusBar />
      <TitleBar />
    </div>
    <Quote />
    <EtfRow />
    <div className="h-[12px] bg-[#171717]" />
    <Tabs />
    <MaRow />
    <PriceChart />
    <div className="flex h-[45px] items-center pl-[12px] text-[36px] text-[#8c8c8c]">
      <div className="w-[876px]"><Num className="scale-x-[0.945]">2012/08/31</Num></div>
      <Num className="scale-x-[0.945]">2023/07/07</Num>
    </div>
    <VolumePanel />
    <MacdPanel />
    <div className="h-[22px]" />
    <div className="h-[8px] bg-[#181818]" />
    <BottomBar />
  </div>
);

export default App;
